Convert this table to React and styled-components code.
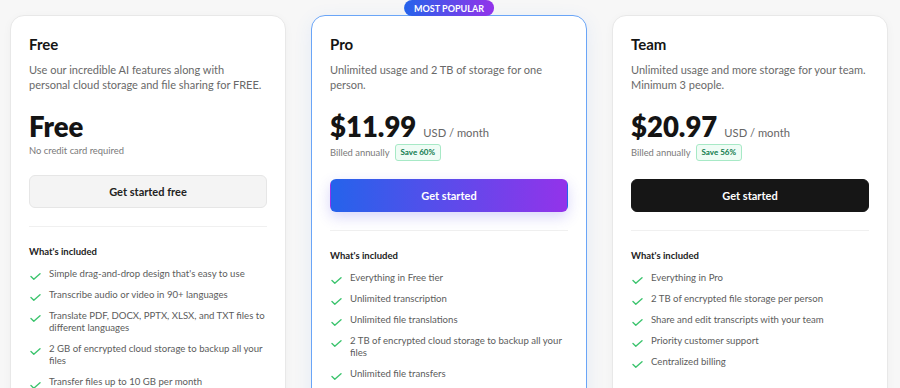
import React from "react"
import styled, { createGlobalStyle, css } from "styled-components"

const GlobalStyle = createGlobalStyle`
  html, body {
    margin: 0;
    padding: 0;
    background: #f7f7f7;
    font-family: Lato, "Noto Sans", sans-serif;
    overflow: hidden;
  }
  * { box-sizing: border-box; }
`

// Row of pricing cards
const Page = styled.div`
  height: 388px;
  display: grid;
  grid-template-columns: repeat(3, 276px);
  column-gap: 25px;
  padding: 15px 0 0 10px;
  align-items: start;
`

const Card = styled.div`
  position: relative;
  background: #fff;
  border: 1px solid #e8e8e8;
  border-radius: 14px;
  padding: 18px 18px 30px;
  min-height: 420px;
  box-shadow: 0 2px 10px rgba(0, 0, 0, 0.035);
  ${(p) =>
    p.$featured &&
    css`
      border-color: #6aa5f7;
      box-shadow: 0 4px 18px rgba(59, 130, 246, 0.10);
    `}
`

const Popular = styled.div`
  position: absolute;
  top: -16px;
  left: 50%;
  transform: translateX(-50%);
  height: 16px;
  padding: 0 10px;
  display: flex;
  align-items: center;
  border-radius: 999px;
  background: linear-gradient(90deg, #2563eb, #9333ea);
  color: #fff;
  font-size: 9px;
  font-weight: 700;
  white-space: nowrap;
`

const Title = styled.h3`
  margin: 0;
  font-size: 15px;
  line-height: 20px;
  font-weight: 700;
  color: #151515;
`

const Desc = styled.p`
  margin: 8px 0 0;
  font-size: 11px;
  line-height: 15px;
  color: #696969;
  min-height: 30px;
`

const PriceRow = styled.div`
  margin-top: 19px;
  display: flex;
  align-items: baseline;
  gap: 7px;
`

const Amount = styled.span`
  font-size: 27.5px;
  line-height: 32px;
  font-weight: 800;
  color: #141414;
`

const Period = styled.span`
  font-size: 11.2px;
  color: #666;
`

const Meta = styled.div`
  margin-top: 1px;
  display: flex;
  align-items: center;
  gap: 5px;
  font-size: 9.4px;
  line-height: 13px;
  color: #7a7a7a;
`

const Save = styled.span`
  height: 17px;
  display: inline-flex;
  align-items: center;
  padding: 0 5px;
  border: 1px solid #a7e9c6;
  background: #effcf5;
  border-radius: 3px;
  color: #0e7a4c;
  font-size: 8px;
  font-weight: 700;
`

const variants = {
  light: css`
    background: #f4f4f4;
    border: 1px solid #e6e6e6;
    color: #222;
  `,
  gradient: css`
    background: linear-gradient(90deg, #2563eb, #9333ea);
    border: 1px solid transparent;
    color: #fff;
    box-shadow: 0 5px 14px rgba(79, 70, 229, 0.22);
  `,
  dark: css`
    background: #161616;
    border: 1px solid #161616;
    color: #fff;
  `,
}

const Button = styled.button`
  margin-top: 18px;
  width: 100%;
  height: 33px;
  border-radius: 6px;
  font-family: inherit;
  font-size: 11px;
  font-weight: 700;
  cursor: pointer;
  ${(p) => variants[p.$variant]}
`

const Divider = styled.hr`
  margin: 18px 0 0;
  border: 0;
  border-top: 1px solid #f0f0f0;
`

const IncludedLabel = styled.div`
  margin-top: 18px;
  font-size: 9.5px;
  line-height: 14px;
  font-weight: 700;
  color: #222;
`

const FeatureList = styled.ul`
  list-style: none;
  margin: 8.5px 0 0;
  padding: 0;
  display: flex;
  flex-direction: column;
  gap: 8.5px;
`

const Feature = styled.li`
  display: flex;
  align-items: flex-start;
  gap: 8px;
  font-size: 9.6px;
  line-height: 12.4px;
  color: #5c5c5c;
`

const CheckMark = styled.svg`
  flex: none;
  width: 11px;
  height: 7px;
  margin-top: 5.5px;
  margin-left: 1px;
`

function Tick() {
  return (
    <CheckMark viewBox="0 0 11 7" fill="none">
      <path
        d="M1 3.6 L3.8 6.2 L10 0.8"
        stroke="#3cc46e"
        strokeWidth="1.4"
        strokeLinecap="round"
        strokeLinejoin="round"
      />
    </CheckMark>
  )
}

const plans = [
  {
    name: "Free",
    desc: "Use our incredible AI features along with personal cloud storage and file sharing for FREE.",
    price: "Free",
    note: "No credit card required",
    cta: "Get started free",
    variant: "light",
    features: [
      "Simple drag-and-drop design that's easy to use",
      "Transcribe audio or video in 90+ languages",
      "Translate PDF, DOCX, PPTX, XLSX, and TXT files to different languages",
      "2 GB of encrypted cloud storage to backup all your files",
      "Transfer files up to 10 GB per month",
    ],
  },
  {
    name: "Pro",
    desc: "Unlimited usage and 2 TB of storage for one person.",
    price: "$11.99",
    period: "USD / month",
    note: "Billed annually",
    save: "Save 60%",
    cta: "Get started",
    variant: "gradient",
    featured: true,
    features: [
      "Everything in Free tier",
      "Unlimited transcription",
      "Unlimited file translations",
      "2 TB of encrypted cloud storage to backup all your files",
      "Unlimited file transfers",
    ],
  },
  {
    name: "Team",
    desc: "Unlimited usage and more storage for your team. Minimum 3 people.",
    price: "$20.97",
    period: "USD / month",
    note: "Billed annually",
    save: "Save 56%",
    cta: "Get started",
    variant: "dark",
    features: [
      "Everything in Pro",
      "2 TB of encrypted file storage per person",
      "Share and edit transcripts with your team",
      "Priority customer support",
      "Centralized billing",
    ],
  },
]

function PlanCard({ plan }) {
  return (
    <Card $featured={plan.featured}>
      {plan.featured && <Popular>MOST POPULAR</Popular>}
      <Title>{plan.name}</Title>
      <Desc>{plan.desc}</Desc>
      <PriceRow>
        <Amount>{plan.price}</Amount>
        {plan.period && <Period>{plan.period}</Period>}
      </PriceRow>
      <Meta>
        <span>{plan.note}</span>
        {plan.save && <Save>{plan.save}</Save>}
      </Meta>
      <Button $variant={plan.variant}>{plan.cta}</Button>
      <Divider />
      <IncludedLabel>What's included</IncludedLabel>
      <FeatureList>
        {plan.features.map((f) => (
          <Feature key={f}>
            <Tick />
            <span>{f}</span>
          </Feature>
        ))}
      </FeatureList>
    </Card>
  )
}

export default function App() {
  return (
    <>
      <GlobalStyle />
      <Page>
        {plans.map((p) => (
          <PlanCard key={p.name} plan={p} />
        ))}
      </Page>
    </>
  )
}
